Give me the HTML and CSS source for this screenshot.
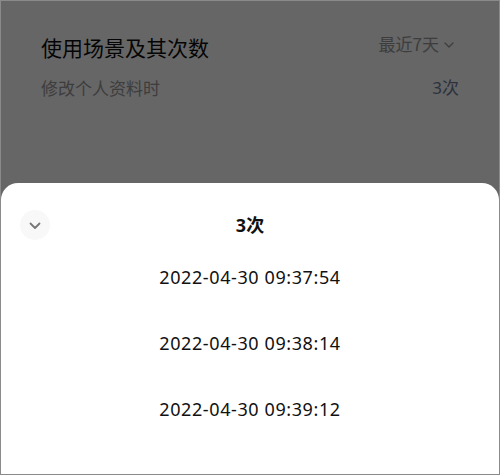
FILE: index.html
```html
<!DOCTYPE html>
<html lang="zh-CN">
<head>
<meta charset="utf-8">
<link rel="stylesheet" href="styles.css">
</head>
<body>
<div class="page">
  <div class="content">
    <div class="head-row">
      <div class="title">使用场景及其次数</div>
      <div class="range">最近7天<svg class="range-chev" viewBox="0 0 10 6" width="10" height="6"><path d="M1 1 L5 5 L9 1" fill="none" stroke="#999" stroke-width="1.3" stroke-linecap="round" stroke-linejoin="round"/></svg></div>
    </div>
    <div class="item-row">
      <div class="item-name">修改个人资料时</div>
      <div class="item-count">3次</div>
    </div>
  </div>
  <div class="overlay"></div>
  <div class="sheet">
    <div class="sheet-head">
      <div class="close-btn"><svg viewBox="0 0 12 8" width="12" height="8"><path d="M1.5 1.5 L6 6 L10.5 1.5" fill="none" stroke="#777" stroke-width="1.8" stroke-linecap="round" stroke-linejoin="round"/></svg></div>
      <div class="sheet-title">3次</div>
      <div class="spacer"></div>
    </div>
    <div class="times">
      <div class="time">2022-04-30 09:37:54</div>
      <div class="time">2022-04-30 09:38:14</div>
      <div class="time">2022-04-30 09:39:12</div>
    </div>
  </div>
</div>
</body>
</html>
```
FILE: styles.css
```css
* { box-sizing: border-box; }
html, body { margin: 0; padding: 0; }
body {
  font-family: "Noto Sans", "Noto Sans CJK SC", sans-serif;
  background: #fff;
}
.page {
  position: relative;
  width: 500px;
  height: 475px;
  border: 1px solid #8a8a8a;
  overflow: hidden;
  background: #fff;
}
.content {
  padding: 31px 40px 0 40px;
}
.head-row {
  display: flex;
  justify-content: space-between;
  align-items: flex-start;
}
.title {
  font-family: "Noto Sans CJK SC", sans-serif;
  font-size: 21px;
  line-height: 30px;
  color: #0d0d0d;
}
.range {
  display: flex;
  align-items: center;
  gap: 5px;
  font-family: "Noto Sans CJK SC", sans-serif;
  font-size: 17px;
  line-height: 24px;
  color: #9a9a9a;
  margin-right: 5px;
}
.range-chev { margin-top: 1px; }
.item-row {
  display: flex;
  justify-content: space-between;
  margin-top: 14px;
}
.item-name, .item-count {
  font-family: "Noto Sans CJK SC", sans-serif;
  font-size: 17px;
  line-height: 24px;
  color: #999;
}
.item-count {
  font-family: "Noto Sans", "Noto Sans CJK SC", sans-serif;
  color: #6f7c9c;
}
.overlay {
  position: absolute;
  inset: 0;
  background: rgba(0, 0, 0, 0.6);
}
.sheet {
  position: absolute;
  left: 0;
  right: 0;
  bottom: 0;
  height: 291px;
  background: #fff;
  border-radius: 17px 17px 0 0;
  display: flex;
  flex-direction: column;
}
.sheet-head {
  display: grid;
  grid-template-columns: 30px 1fr 30px;
  align-items: center;
  padding: 26px 19px 0 19px;
  height: 58px;
}
.close-btn {
  width: 30px;
  height: 30px;
  border-radius: 50%;
  background: #f8f8f8;
  display: flex;
  align-items: center;
  justify-content: center;
}
.close-btn svg { margin-top: 1px; }
.sheet-title {
  text-align: center;
  font-family: "Noto Sans", "Noto Sans CJK SC", sans-serif;
  font-weight: 700;
  font-size: 18px;
  line-height: 32px;
  color: #111;
}
.times {
  padding-top: 3px;
  display: flex;
  flex-direction: column;
}
.time {
  height: 66px;
  line-height: 66px;
  text-align: center;
  font-family: "Noto Sans", sans-serif;
  font-size: 18px;
  letter-spacing: 0.6px;
  color: #111;
}
```
